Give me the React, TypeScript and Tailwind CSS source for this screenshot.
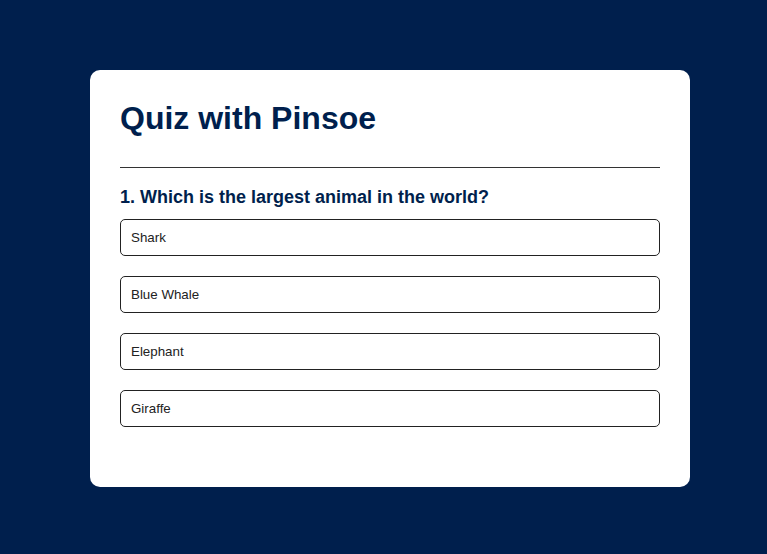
const options = ['Shark', 'Blue Whale', 'Elephant', 'Giraffe'];

const App = () => {
  return (
    <div className="min-h-[554px] bg-[#001f4d] pt-[70px] pl-[90px]" style={{ fontFamily: '"Liberation Sans", Arial, sans-serif' }}>
      <div className="w-[600px] bg-white rounded-[10px] pt-[30px] px-[30px] pb-[60px]">
        <h1 className="text-[32px] leading-[37px] font-bold text-[#001f4d]">Quiz with Pinsoe</h1>
        <hr className="mt-[30px] border-0 border-t border-[#333]" />
        <h2 className="mt-[19px] text-[18px] leading-[21px] font-bold text-[#001f4d]">
          1. Which is the largest animal in the world?
        </h2>
        <div className="mt-[11px] flex flex-col gap-[20px]">
          {options.map((opt) => (
            <button
              key={opt}
              className="w-full h-[37px] text-left px-[10px] text-[13.33px] text-[#222] border border-[#222] rounded-[5px] bg-white"
            >
              {opt}
            </button>
          ))}
        </div>
      </div>
    </div>
  );
};

export default App;
